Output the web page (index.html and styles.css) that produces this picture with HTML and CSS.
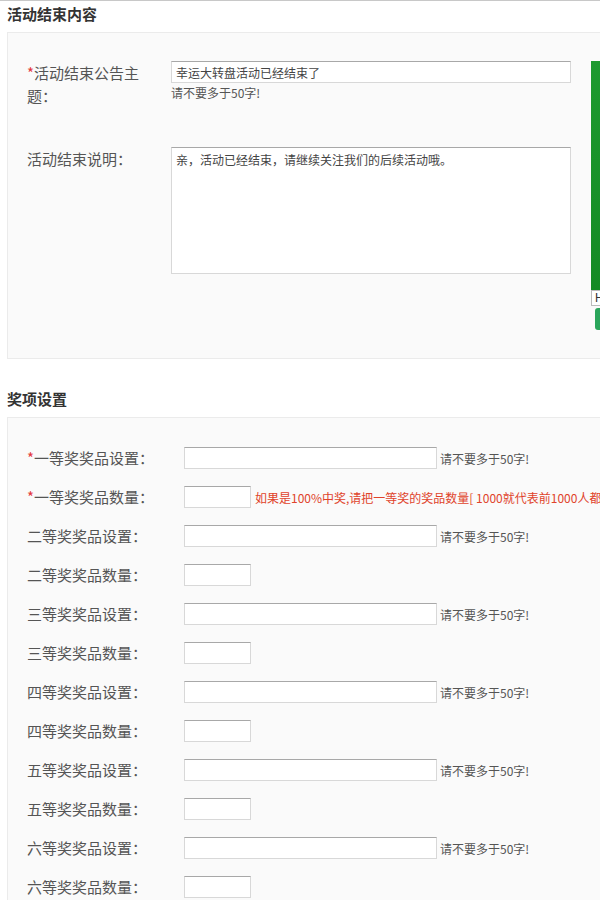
FILE: index.html
```html
<!DOCTYPE html>
<html lang="zh-CN">
<head>
    <meta charset="UTF-8">
    <meta name="viewport" content="width=device-width, initial-scale=1.0">
    <title>活动设置</title>
    <link rel="stylesheet" href="styles.css">
</head>
<body>
    <div class="page">
        <h3 class="block-title">活动结束内容</h3>
        <div class="panel panel-end">
            <div class="form">
                <div class="field field-top">
                    <label class="label label-narrow"><span class="req">*</span>活动结束公告主题：</label>
                    <div class="control">
                        <input type="text" class="input input-full" value="幸运大转盘活动已经结束了">
                        <div class="hint">请不要多于50字!</div>
                    </div>
                </div>
                <div class="field">
                    <label class="label label-narrow">活动结束说明：</label>
                    <div class="control">
                        <textarea class="textarea">亲，活动已经结束，请继续关注我们的后续活动哦。</textarea>
                    </div>
                </div>
            </div>
            <div class="preview">
                <div class="preview-screen"></div>
                <div class="preview-input">H</div>
                <div class="preview-btn"></div>
            </div>
        </div>

        <h3 class="block-title block-title-gap">奖项设置</h3>
        <div class="panel panel-prize">
            <div class="row">
                <label class="label"><span class="req">*</span>一等奖奖品设置：</label>
                <input type="text" class="input input-name">
                <span class="hint-inline">请不要多于50字!</span>
            </div>
            <div class="row">
                <label class="label"><span class="req">*</span>一等奖奖品数量：</label>
                <input type="text" class="input input-num">
                <span class="warn">如果是100%中奖,请把一等奖的奖品数量[ 1000就代表前1000人都中奖 ]</span>
            </div>
            <div class="row">
                <label class="label">二等奖奖品设置：</label>
                <input type="text" class="input input-name">
                <span class="hint-inline">请不要多于50字!</span>
            </div>
            <div class="row">
                <label class="label">二等奖奖品数量：</label>
                <input type="text" class="input input-num">
            </div>
            <div class="row">
                <label class="label">三等奖奖品设置：</label>
                <input type="text" class="input input-name">
                <span class="hint-inline">请不要多于50字!</span>
            </div>
            <div class="row">
                <label class="label">三等奖奖品数量：</label>
                <input type="text" class="input input-num">
            </div>
            <div class="row">
                <label class="label">四等奖奖品设置：</label>
                <input type="text" class="input input-name">
                <span class="hint-inline">请不要多于50字!</span>
            </div>
            <div class="row">
                <label class="label">四等奖奖品数量：</label>
                <input type="text" class="input input-num">
            </div>
            <div class="row">
                <label class="label">五等奖奖品设置：</label>
                <input type="text" class="input input-name">
                <span class="hint-inline">请不要多于50字!</span>
            </div>
            <div class="row">
                <label class="label">五等奖奖品数量：</label>
                <input type="text" class="input input-num">
            </div>
            <div class="row">
                <label class="label">六等奖奖品设置：</label>
                <input type="text" class="input input-name">
                <span class="hint-inline">请不要多于50字!</span>
            </div>
            <div class="row">
                <label class="label">六等奖奖品数量：</label>
                <input type="text" class="input input-num">
            </div>
            <div class="row">
                <label class="label">七等奖奖品设置：</label>
                <input type="text" class="input input-name">
                <span class="hint-inline">请不要多于50字!</span>
            </div>
        </div>
    </div>
</body>
</html>
```

FILE: styles.css
```css
html, body {
    margin: 0;
    padding: 0;
    overflow: hidden;
}
body {
    background: #fff;
    font-family: "Microsoft YaHei", "Noto Sans CJK SC", sans-serif;
    color: #555;
    border-top: 1px solid #c8c8c8;
}
.page {
    width: 960px;
}
.block-title {
    margin: 0;
    padding-left: 7px;
    height: 28px;
    line-height: 26px;
    font-size: 15px;
    font-weight: bold;
    color: #333;
}
.block-title-gap {
    margin-top: 27px;
}
.panel {
    margin: 3px 0 0 7px;
    border: 1px solid #ebebeb;
    background: #fafafa;
    width: 900px;
}
.panel-end {
    display: flex;
    padding: 28px 0 28px 19px;
}
.form {
    width: 564px;
}
.field {
    display: flex;
    align-items: flex-start;
    margin-bottom: 40px;
}
.field:last-child {
    margin-bottom: 0;
}
.label {
    flex: 0 0 auto;
    width: 157px;
    font-size: 15px;
    line-height: 22px;
    color: #555;
}
.label-narrow {
    width: 124px;
    margin-right: 20px;
    line-height: 23px;
}
.req {
    color: #e4393c;
}
.control {
    width: 400px;
}
.input, .textarea {
    box-sizing: border-box;
    margin: 0;
    border: 1px solid #d8d8d8;
    border-top-color: #a8a8a8;
    background: #fff;
    font-family: "Microsoft YaHei", "Noto Sans CJK SC", sans-serif;
    font-size: 12px;
    color: #444;
    outline: none;
}
.input {
    height: 22px;
    padding: 0 4px;
}
.input-full {
    display: block;
    width: 400px;
}
.textarea {
    display: block;
    width: 400px;
    height: 127px;
    padding: 3px 4px;
    resize: none;
    line-height: 18px;
}
.hint {
    margin-top: 1px;
    font-size: 12px;
    line-height: 18px;
    color: #555;
}
.preview {
    flex: 0 0 320px;
}
.preview-screen {
    height: 229px;
    background: linear-gradient(#1d9a2f, #148a24);
}
.preview-input {
    box-sizing: border-box;
    height: 16px;
    border: 1px solid #bbb;
    background: #fff;
    font-family: "Liberation Sans", Arial, sans-serif;
    font-size: 12px;
    line-height: 14px;
    padding-left: 3px;
    color: #333;
}
.preview-btn {
    margin: 2px 0 0 4px;
    height: 22px;
    border-radius: 3px 0 0 3px;
    background: #2aa55b;
}
.panel-prize {
    padding: 29px 0 20px 19px;
}
.row {
    display: flex;
    align-items: center;
    height: 22px;
    margin-bottom: 17px;
    white-space: nowrap;
}
.input-name {
    width: 253px;
}
.input-num {
    width: 67px;
}
.hint-inline {
    margin-left: 3px;
    font-size: 12px;
    color: #555;
}
.warn {
    margin-left: 4px;
    font-size: 12px;
    color: #e0432b;
}
```
